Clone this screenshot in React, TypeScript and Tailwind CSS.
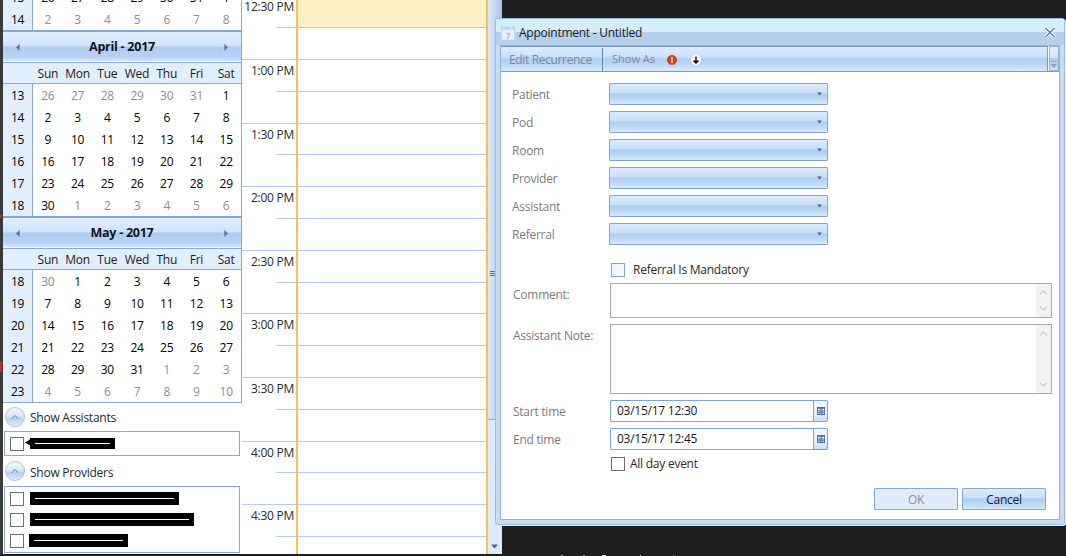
import React from 'react';
import { ChevronUp, ChevronDown } from 'lucide-react';

const HEAD_BG = 'bg-[linear-gradient(#e2f0fe_0%,#cfe2fa_48%,#aecbf0_52%,#b9d3f3_88%,#d6e7fb_100%)]';
const COMBO_BG = 'bg-[linear-gradient(#dcebfd_0%,#c9dffa_44%,#a9cdf2_50%,#c0dcf7_80%,#d9ebfc_100%)]';

const DAY_NAMES = ['Sun', 'Mon', 'Tue', 'Wed', 'Thu', 'Fri', 'Sat'];

type Cell = { n: number; muted?: boolean };
type Week = { wk: number; days: Cell[] };

const week = (wk: number, start: number, last: number, firstIn: boolean): Week => {
  const days: Cell[] = [];
  let n = start;
  let inMonth = firstIn;
  for (let i = 0; i < 7; i++) {
    days.push({ n, muted: !inMonth });
    n++;
    if (n > last) {
      n = 1;
      inMonth = !inMonth;
    }
  }
  return { wk, days };
};

const marchTail: Week[] = [
  { wk: 13, days: [26, 27, 28, 29, 30, 31, 1].map((n) => ({ n })) },
  { wk: 14, days: [2, 3, 4, 5, 6, 7, 8].map((n) => ({ n, muted: true })) },
];

const aprilWeeks = [
  week(13, 26, 31, false),
  week(14, 2, 99, true),
  week(15, 9, 99, true),
  week(16, 16, 99, true),
  week(17, 23, 99, true),
  week(18, 30, 30, true),
];

const mayWeeks = [
  week(18, 30, 30, false),
  week(19, 7, 99, true),
  week(20, 14, 99, true),
  week(21, 21, 99, true),
  week(22, 28, 31, true),
  week(23, 4, 99, false),
];

const WeekRows = ({ weeks }: { weeks: Week[] }) => (
  <>
    {weeks.map((w) => (
      <div key={`${w.wk}-${w.days[0].n}`} className="flex h-[22px] items-center">
        <div className="w-[29px] bg-[#e0eefd] h-full pt-px flex items-center justify-center text-black">{w.wk}</div>
        <div className="flex-1 h-full grid grid-cols-7 border-l border-[#8aa8d8] bg-white">
          {w.days.map((d, i) => (
            <div key={i} className={`pt-px flex items-center justify-center ${d.muted ? 'text-[#8e8e8e]' : 'text-black'}`}>
              {d.n}
            </div>
          ))}
        </div>
      </div>
    ))}
  </>
);

const Triangle = ({ dir }: { dir: 'left' | 'right' }) => (
  <svg width="6" height="9" viewBox="0 0 6 9">
    <path d={dir === 'left' ? 'M5 0.5V8.5L0.5 4.5Z' : 'M1 0.5V8.5L5.5 4.5Z'} fill="#4f77ad" stroke="#dce9fa" strokeWidth="0.5" />
  </svg>
);

const MonthCalendar = ({ title, weeks }: { title: string; weeks: Week[] }) => (
  <div className="border-t-2 border-[#85a6d6] border-r border-r-[#8aa8d8]">
    <div className={`h-[30px] pt-px flex items-center justify-between px-[12px] border-b border-[#f0f7ff] ${HEAD_BG}`}>
      <Triangle dir="left" />
      <span className="font-bold text-[#10141c] text-[12.5px]">{title}</span>
      <Triangle dir="right" />
    </div>
    <div className="h-px bg-[#8aa8d8]" />
    <div className="flex h-[21px] bg-[#e0eefd] border-b border-[#8aa8d8]">
      <div className="w-[30px]" />
      <div className="flex-1 grid grid-cols-7">
        {DAY_NAMES.map((d) => (
          <div key={d} className="pt-px flex items-center justify-center text-[#1c1c1c]">{d}</div>
        ))}
      </div>
    </div>
    <WeekRows weeks={weeks} />
  </div>
);

const RoundToggle = () => (
  <div className="w-[20px] h-[20px] rounded-full border border-[#a9c3e6] bg-[linear-gradient(#f4f9ff_0%,#dbe9fb_45%,#b4d0f3_60%,#e2effd_100%)] flex items-center justify-center">
    <ChevronUp size={12} strokeWidth={2} className="text-[#4f77ad]" />
  </div>
);

const Check = () => <div className="w-[14px] h-[14px] border border-[#707070] bg-white shrink-0" />;

const Redacted = ({ width, line, tall = false }: { width: number; line: number; tall?: boolean }) => (
  <div className={`${tall ? 'h-[13px]' : 'h-[11px]'} bg-black flex items-center shrink-0`} style={{ width }}>
    <div className="h-px bg-white ml-[5px]" style={{ width: line }} />
  </div>
);

const TIMES = ['12:30 PM', '1:00 PM', '1:30 PM', '2:00 PM', '2:30 PM', '3:00 PM', '3:30 PM', '4:00 PM', '4:30 PM'];

const ComboField = ({ label }: { label: string }) => (
  <div className="flex items-center h-[22px]">
    <span className="w-[97px] pt-[2px] text-[#7b7b7b]">{label}</span>
    <div className={`w-[219px] h-full rounded-[1px] border border-[#84a5d2] flex items-center justify-end pr-[5px] ${COMBO_BG}`}>
      <svg width="5" height="4" viewBox="0 0 5 4">
        <path d="M0 0.5H5L2.5 3.5Z" fill="#47689a" />
      </svg>
    </div>
  </div>
);

const MemoField = ({ label, height }: { label: string; height: number }) => (
  <div className="flex" style={{ height }}>
    <span className="w-[98px] pl-px pt-[3px] text-[#7b7b7b]">{label}</span>
    <div className="w-[442px] h-full border border-[#ababab] flex justify-end bg-white">
      <div className="w-[15px] h-full bg-[#f2f2f2] flex flex-col justify-between items-center py-[2px]">
        <ChevronUp size={13} className="text-[#c4c4c4]" />
        <ChevronDown size={13} className="text-[#c4c4c4]" />
      </div>
    </div>
  </div>
);

const DateField = ({ label, value }: { label: string; value: string }) => (
  <div className="flex items-center h-[22px]">
    <span className="w-[98px] pl-px pt-[2px] text-[#7b7b7b]">{label}</span>
    <div className="w-[218px] h-full border border-[#7fa5d8] rounded-[1px] flex bg-white">
      <span className="flex-1 pl-[6px] leading-[20px] text-[#1a1a1a]">{value}</span>
      <div className="w-[14px] border-l border-[#7fa5d8] bg-[linear-gradient(#f3f8fe_0%,#e4effc_70%,#c3dcf7_100%)] flex items-center justify-center">
        <svg width="8" height="8" viewBox="0 0 9 9">
          <rect width="9" height="9" fill="#4a6ea8" />
          <path d="M1 2h2v2H1zM4 2h1v2H4zM6 2h2v2H6zM1 5h2v1H1zM4 5h1v1H4zM6 5h2v1H6zM1 7h2v1H1zM4 7h1v1H4zM6 7h2v1H6z" fill="#fff" />
        </svg>
      </div>
    </div>
  </div>
);

export default function App() {
  return (
    <div className="relative w-[1066px] h-[556px] overflow-hidden bg-[#1e1e1e] text-[12px] tracking-[-0.25px] flex items-start font-['Open_Sans','Liberation_Sans',sans-serif]">
      {/* left strip */}
      <div className="relative w-[3px] h-[554px] bg-[#3a3a3a] shrink-0">
        <div className="absolute left-0 top-[215px] w-[2px] h-[3px] bg-[#d02020]" />
        <div className="absolute left-0 top-[361px] w-[2px] h-[11px] bg-[#d02020]" />
      </div>

      {/* calendars + filters */}
      <div className="w-[239px] h-[554px] bg-white shrink-0 overflow-hidden">
        <div className="-mt-[14px]">
          <div className="border-r border-[#8aa8d8]">
            <WeekRows weeks={marchTail} />
          </div>
          <MonthCalendar title="April - 2017" weeks={aprilWeeks} />
          <MonthCalendar title="May - 2017" weeks={mayWeeks} />
          <div className="h-px bg-[#8aa8d8]" />
        </div>
        <div className="flex items-center h-[28px] pl-[2px] gap-[5px] text-[#1c2a3a]">
          <RoundToggle />
          <span className="pt-[2px]">Show Assistants</span>
        </div>
        <div className="ml-px mr-[2px] h-[25px] border border-[#8aa8d8] flex items-center pl-[5px]">
          <Check />
          <svg width="6" height="7" viewBox="0 0 6 7" className="shrink-0 -mt-[3px]">
            <path d="M1 3.5L6 0.5V6.5Z" fill="#000" />
          </svg>
          <div className="-mt-[1px]"><Redacted width={85} line={75} /></div>
        </div>
        <div className="flex items-center h-[30px] pl-[2px] gap-[5px] text-[#1c2a3a]">
          <RoundToggle />
          <span className="pt-[3px]">Show Providers</span>
        </div>
        <div className="ml-px mr-[2px] h-[67px] border border-[#8aa8d8] flex flex-col justify-center gap-[7px] pl-[5px]">
          <div className="flex items-center gap-[6px]"><Check /><Redacted width={149} line={139} tall /></div>
          <div className="flex items-center gap-[6px]"><Check /><Redacted width={164} line={154} tall /></div>
          <div className="flex items-center gap-[5px]"><Check /><Redacted width={99} line={89} tall /></div>
        </div>
      </div>

      {/* time gutter */}
      <div className="w-[54px] h-[554px] overflow-hidden bg-white shrink-0">
        <div className="-mt-[3.6px]">
          {TIMES.map((t) => (
            <div key={t} className="h-[63.6px] border-b border-[#b5cbec] flex flex-col">
              <div className="h-[31.8px] flex flex-col">
                <span className="text-right pr-[2px] pt-px leading-[20px] text-[#2a2a2a]">{t}</span>
                <div className="mt-auto ml-auto w-[20px] border-b border-[#b5cbec]" />
              </div>
            </div>
          ))}
        </div>
      </div>

      {/* day column */}
      <div className="w-[192px] h-[554px] border-l-2 border-r-2 border-[#f4c44e] bg-white overflow-hidden shrink-0">
        <div className="-mt-[3.6px]">
          <div className="h-[31.8px] bg-[#fdeec6] border-b border-[#f0c860]" />
          {Array.from({ length: 17 }).map((_, i) => (
            <div key={i} className="h-[31.8px] border-b border-[#b5cbec]" />
          ))}
        </div>
      </div>

      {/* scrollbar */}
      <div className="w-[14px] h-[554px] shrink-0 bg-[#dcebfb] flex flex-col">
        <div className="h-[420px] bg-[linear-gradient(90deg,#dae8f9_0%,#c9dbf3_40%,#a9c0e2_100%)] border-b border-[#8fb0dc] pt-[271px]">
          <div className="ml-[2px] w-[5px] flex flex-col gap-px">
            <div className="h-px bg-[#4f6f9f]" />
            <div className="h-px bg-[#4f6f9f]" />
            <div className="h-px bg-[#4f6f9f]" />
          </div>
        </div>
        <div className="mt-auto mb-[5px] flex justify-center pr-[1px]">
          <svg width="7" height="5" viewBox="0 0 7 5">
            <path d="M0 0.5H7L3.5 4.5Z" fill="#47689a" />
          </svg>
        </div>
      </div>

      {/* specks of whatever is behind the window, bottom edge */}
      <div className="absolute left-[561px] bottom-0 h-px flex">
        <div className="w-[2px] bg-[#e0a060]" />
        <div className="ml-[20px] w-[2px] bg-[#8a8a8a]" />
        <div className="ml-[17px] w-[4px] bg-[#e0d0c0]" />
        <div className="ml-[34px] w-px bg-[#c0c0c0]" />
        <div className="ml-[32px] w-px bg-[#a09060]" />
      </div>

      {/* appointment window */}
      <div className="absolute left-[495px] top-[18px] w-[570px] h-[507px] rounded-[3px] border border-[#9cc0e4] bg-[#c8dcf2] flex flex-col shadow-[1px_1px_0_#e8f0fa] px-[4px] pb-[4px]">
        <div className="-mx-[4px] h-[26px] flex flex-col relative shrink-0">
          <div className="h-[13px] bg-[#d5eefb]" />
          <div className="h-[13px] bg-[#b8cfea]" />
          <div className="absolute inset-0 flex items-center pl-[5px] pr-[8px]">
            <svg width="15" height="17" viewBox="0 0 16 17" className="shrink-0">
              <rect x="0.5" y="2.5" width="14" height="14" fill="#e8f1fb" stroke="#c3d7ee" />
              <rect x="0.5" y="2.5" width="14" height="3" fill="#bcd3ee" />
              <path d="M3 1v3M11 1v3" stroke="#dfeaf7" strokeWidth="1.5" />
              <text x="7.5" y="15" fontSize="9" fontWeight="700" textAnchor="middle" fill="#a7bfdc">7</text>
            </svg>
            <span className="ml-[3px] pt-[2px] text-[#14181f] text-[12px]">Appointment - Untitled</span>
            <svg width="12" height="11" viewBox="0 0 12 11" className="ml-auto">
              <path d="M1.5 1L10.5 10M10.5 1L1.5 10" stroke="#fff" strokeWidth="3.4" />
              <path d="M1.5 1L10.5 10M10.5 1L1.5 10" stroke="#5f84b6" strokeWidth="1.6" />
            </svg>
          </div>
        </div>

        <div className="flex-1 border border-[#8db2e0] bg-white flex flex-col min-h-0">
          {/* toolbar */}
          <div className="h-[26px] flex shrink-0 border-b border-[#7e9cc8]">
            <div className={`flex-1 flex items-center border-t border-[#7e9cc8] border-r ${COMBO_BG}`}>
              <span className="w-[102px] pl-[8px] text-[#7c8797] text-[12px] tracking-[-0.35px] border-r border-[#5f88bf] h-[23px] leading-[24px]">Edit Recurrence</span>
              <span className="ml-[9px] text-[#7c8797] text-[11px] tracking-normal">Show As</span>
              <div className="ml-[12px] mt-px w-[10px] h-[10px] rounded-full bg-[#dd3a1c] flex items-center justify-center text-white font-bold text-[9px] leading-none">!</div>
              <div className="ml-[14px] mt-px w-[10px] h-[10px] rounded-full bg-white flex items-center justify-center">
                <svg width="8" height="8" viewBox="0 0 8 8">
                  <path d="M4 0.5V7M1.5 4.5L4 7L6.5 4.5" stroke="#111" strokeWidth="1.5" fill="none" />
                </svg>
              </div>
            </div>
            <div className={`w-[10px] ml-px flex flex-col items-center justify-end pb-[2px] gap-[2px] border border-[#9ab6dc] ${HEAD_BG}`}>
              <div className="w-[6px] h-px bg-[#8ea6c8]" />
              <svg width="6" height="4" viewBox="0 0 6 4">
                <path d="M0 0H6L3 4Z" fill="#8ea6c8" />
              </svg>
            </div>
          </div>

          {/* form */}
          <div className="flex-1 pl-[11px] pt-[11px] flex flex-col">
            <div className="flex flex-col gap-[6px]">
              {['Patient', 'Pod', 'Room', 'Provider', 'Assistant', 'Referral'].map((l) => (
                <ComboField key={l} label={l} />
              ))}
            </div>
            <div className="mt-[18px] ml-[99px] flex items-center h-[14px]">
              <div className="w-[14px] h-[14px] border border-[#7ca6e0] bg-[#f3f8ff] shrink-0" />
              <span className="ml-[8px] text-[#2a2a2a]">Referral Is Mandatory</span>
            </div>
            <div className="mt-[6px] flex flex-col gap-[6px]">
              <MemoField label="Comment:" height={35} />
              <MemoField label="Assistant Note:" height={70} />
              <DateField label="Start time" value="03/15/17 12:30" />
              <DateField label="End time" value="03/15/17 12:45" />
            </div>
            <div className="mt-[7px] ml-[99px] flex items-center h-[14px]">
              <Check />
              <span className="ml-[5px] text-[#2a2a2a]">All day event</span>
            </div>
            <div className="mt-[17px] ml-[362px] flex gap-[4px]">
              <div className="w-[84px] h-[22px] pt-px border border-[#84a9da] rounded-[1px] bg-[#deecfc] flex items-center justify-center text-[#8a8f96]">OK</div>
              <div className={`w-[84px] h-[22px] pt-px border border-[#84a9da] rounded-[1px] flex items-center justify-center text-[#14181f] ${COMBO_BG}`}>Cancel</div>
            </div>
          </div>
        </div>
      </div>
    </div>
  );
}
